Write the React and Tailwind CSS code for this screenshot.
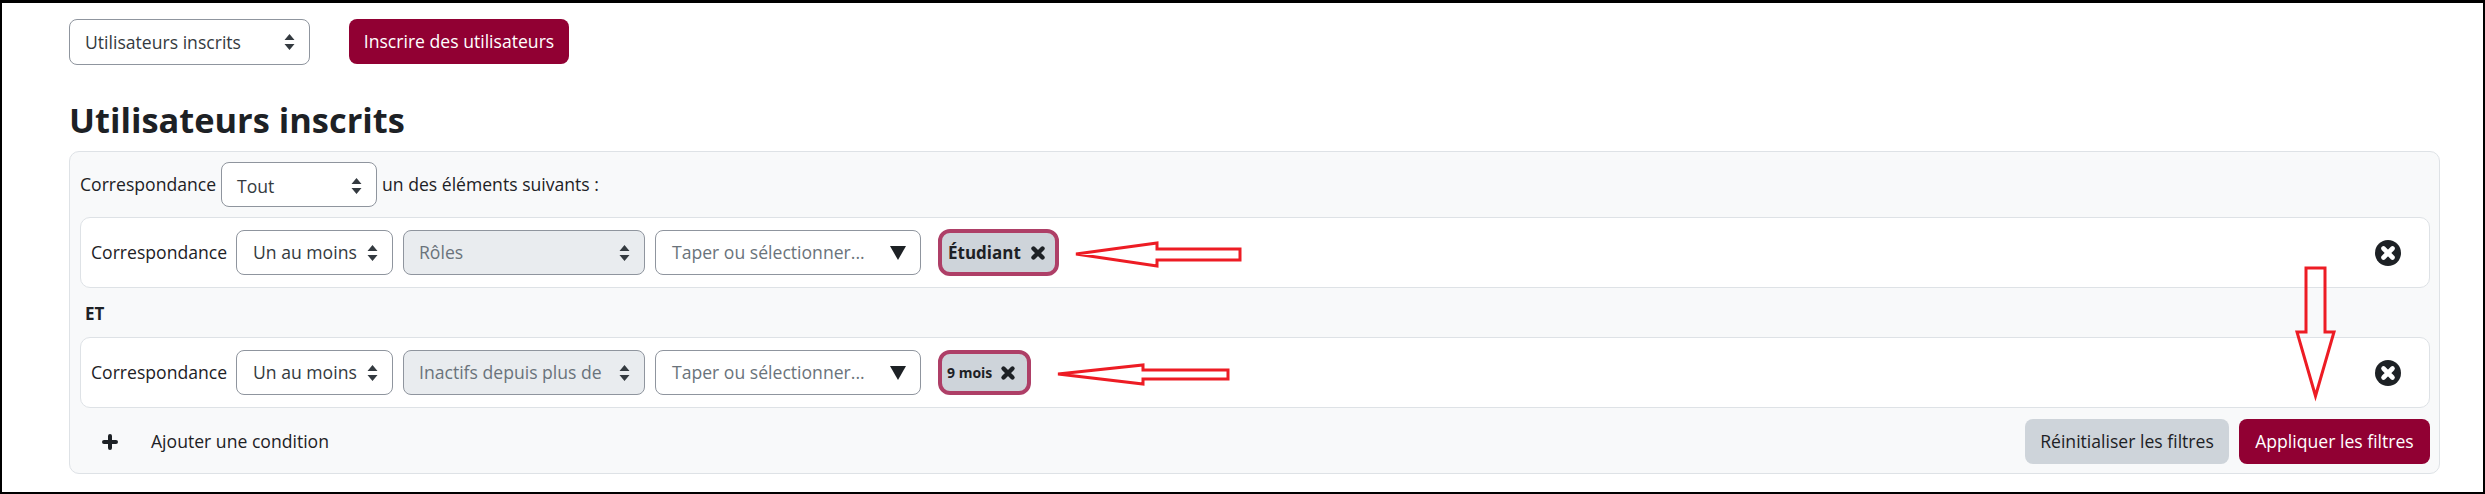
import React from "react";

const Updown = () => (
  <svg width="11" height="18" viewBox="0 0 11 18" className="shrink-0">
    <path d="M5.5 1 10.5 7H.5zM5.5 17 .5 11h10z" fill="#343a40" />
  </svg>
);

const Select = ({ label, className, muted, disabled }) => (
  <div
    className={`flex h-[45px] shrink-0 items-center justify-between rounded-[8px] border border-[#8f959e] pr-[14px] ${
      disabled ? "bg-[#e9ecef]" : "bg-white"
    } ${muted ? "text-[#6a737b]" : "text-[#343a40]"} ${className}`}
  >
    <span>{label}</span>
    <Updown />
  </div>
);

const Cross = ({ size }) => (
  <svg width={size} height={size} viewBox="0 0 16 16" className="shrink-0">
    <path d="M3.5 3.5 12.5 12.5M12.5 3.5 3.5 12.5" stroke="#1d2125" strokeWidth="4.4" strokeLinecap="round" />
  </svg>
);

const Autocomplete = () => (
  <div className="flex h-[45px] w-[266px] shrink-0 items-center justify-between rounded-[8px] border border-[#8f959e] bg-white pl-[16px] pr-[14px] text-[#6a737b]">
    <span>Taper ou sélectionner...</span>
    <svg width="16" height="14" viewBox="0 0 16 14" className="shrink-0">
      <path d="M0 0H16L8 14z" fill="#1d2125" />
    </svg>
  </div>
);

const Chip = ({ children, className, text }) => (
  <div
    className={`ml-[17px] flex items-center rounded-[12px] border-4 border-[#ae3f67] bg-[#ced4da] font-bold text-[#1d2125] ${text} ${className}`}
  >
    {children}
  </div>
);

const Remove = () => (
  <svg width="26" height="26" viewBox="0 0 26 26" className="ml-auto mr-[28px] shrink-0">
    <circle cx="13" cy="13" r="13" fill="#1d2125" />
    <path d="M8.5 8.5 17.5 17.5M17.5 8.5 8.5 17.5" stroke="#fff" strokeWidth="4.6" strokeLinecap="round" />
  </svg>
);

const FilterRow = ({ field, children }) => (
  <div className="flex h-[71px] items-center rounded-[10px] border border-[#dee2e6] bg-white pl-[10px]">
    <span className="w-[145px] shrink-0 text-[#1d2125]">Correspondance</span>
    <Select label="Un au moins" className="w-[157px] pl-[16px]" />
    <Select label={field} muted disabled className="ml-[10px] w-[242px] pl-[15px]" />
    <div className="ml-[10px]">
      <Autocomplete />
    </div>
    {children}
    <Remove />
  </div>
);

// annotations rouges posées sur la capture
const Arrows = () => (
  <svg className="absolute left-[-2px] top-[-3px]" width="2485" height="494" fill="none" stroke="#ed1c24" strokeWidth="3">
    <path d="M1076 254 1157 243V249H1240V260H1157V266Z" />
    <path d="M1058 374 1143 365V370H1228V379H1143V384Z" />
    <path d="M2306 268H2325V332H2334L2315.5 396 2297 332H2306Z" />
  </svg>
);

export default function App() {
  return (
    <div
      className="relative h-[494px] w-[2485px] overflow-hidden border-2 border-t-[3px] border-black bg-white pl-[67px] pr-[43px] pt-[16px] text-[17.6px] text-[#1d2125]"
      style={{ fontFamily: '"Open Sans", "Noto Sans", sans-serif' }}
    >
      <div className="flex items-start">
        <Select label="Utilisateurs inscrits" className="h-[46px] w-[241px] pl-[15px]" />
        <button className="ml-[39px] h-[45px] w-[220px] rounded-[8px] bg-[#910033] text-white">
          Inscrire des utilisateurs
        </button>
      </div>

      <h2 className="mt-[27px] h-[59px] text-[34.4px] font-bold leading-[56px] text-[#1d2125]">Utilisateurs inscrits</h2>

      <div className="h-[323px] rounded-[10px] border border-[#dee2e6] bg-[#f8f9fa] pl-[10px] pr-[9px] pt-[10px]">
        <div className="flex items-center">
          <span className="w-[141px] shrink-0">Correspondance</span>
          <Select label="Tout" className="w-[156px] pl-[15px] pt-[3px]" />
          <span className="ml-[5px]">un des éléments suivants :</span>
        </div>

        <div className="mt-[10px]">
          <FilterRow field="Rôles">
            <Chip className="h-[47px] w-[121px] pl-[6px]" text="text-[17px]">
              <span>Étudiant</span>
              <span className="ml-[9px]"><Cross size={16} /></span>
            </Chip>
          </FilterRow>
        </div>

        <div className="flex h-[49px] items-center pl-[5px] pt-[2px] text-[17px] font-bold">ET</div>

        <FilterRow field="Inactifs depuis plus de">
          <Chip className="h-[45px] w-[93px] pl-[5px]" text="text-[14px]">
            <span>9 mois</span>
            <span className="ml-[8px]"><Cross size={16} /></span>
          </Chip>
        </FilterRow>

        <div className="mt-[11px] flex items-center">
          <svg width="16" height="16" viewBox="0 0 16 16" className="ml-[22px] shrink-0">
            <path d="M8 2V14M2 8H14" stroke="#1d2125" strokeWidth="4" strokeLinecap="round" />
          </svg>
          <span className="ml-[33px]">Ajouter une condition</span>
          <button className="ml-auto h-[45px] w-[204px] rounded-[8px] bg-[#ced4da] text-[#1d2125]">
            Réinitialiser les filtres
          </button>
          <button className="ml-[10px] h-[45px] w-[191px] rounded-[8px] bg-[#910033] text-white">
            Appliquer les filtres
          </button>
        </div>
      </div>

      <Arrows />
    </div>
  );
}
